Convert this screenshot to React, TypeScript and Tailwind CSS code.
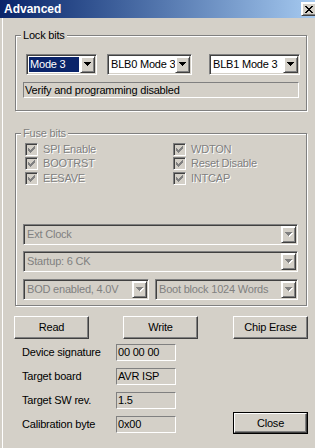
import clsx from "clsx";

const sunken =
  "border border-t-[#808080] border-l-[#808080] border-r-white border-b-white shadow-[inset_1px_1px_0_#404040,inset_-1px_-1px_0_#d4d0c8]";
const raised =
  "border border-t-white border-l-white border-r-[#404040] border-b-[#404040] shadow-[inset_-1px_-1px_0_#808080]";
const dimText = "text-[#808080] [text-shadow:1px_1px_0_#fff]";

function Arrow({ disabled }: { disabled?: boolean }) {
  return (
    <svg width="8" height="5" viewBox="0 0 8 5" className="overflow-visible" shapeRendering="crispEdges">
      {disabled && <path d="M1 1h7v1H1zM2 2h5v1H2zM3 3h3v1H3zM4 4h1v1H4z" fill="#fff" />}
      <path d="M0 0h7v1H0zM1 1h5v1H1zM2 2h3v1H2zM3 3h1v1H3z" fill={disabled ? "#808080" : "#000"} />
    </svg>
  );
}

function Combo({
  text,
  className,
  selected,
  disabled,
}: {
  text: string;
  className: string;
  selected?: boolean;
  disabled?: boolean;
}) {
  return (
    <div className={clsx("flex h-[21px] p-[1px]", sunken, disabled ? "bg-[#d4d0c8]" : "bg-white", className)}>
      <div className="flex min-w-0 flex-1 items-center overflow-hidden p-[1px]">
        <span
          className={clsx(
            "flex h-full flex-1 items-center whitespace-nowrap pl-[1px]",
            selected && "bg-[#0a246a] text-white",
            disabled && "text-[#808080]"
          )}
        >
          {text}
        </span>
      </div>
      <div className={clsx("flex w-[15px] shrink-0 items-center justify-center bg-[#d4d0c8]", raised, "border-t-[#d4d0c8] border-l-[#d4d0c8] shadow-[inset_1px_1px_0_#fff,inset_-1px_-1px_0_#808080]")}>
        <Arrow disabled={disabled} />
      </div>
    </div>
  );
}

function Check({ label }: { label: string }) {
  return (
    <div className="flex items-center">
      <div className={clsx("flex h-[13px] w-[13px] items-center justify-center bg-[#d4d0c8]", sunken)}>
        <svg width="7" height="7" viewBox="0 0 7 7" shapeRendering="crispEdges">
          <path d="M6 0h1v3H6zM5 1h1v3H5zM0 2h1v3H0zM1 3h1v3H1zM2 4h1v3H2zM3 3h1v3H3zM4 2h1v3H4z" fill="#808080" />
        </svg>
      </div>
      <span className={clsx("ml-[5px] whitespace-nowrap", dimText)}>{label}</span>
    </div>
  );
}

function Button({ label, className }: { label: string; className?: string }) {
  return (
    <div className={clsx("flex h-[23px] w-[75px] items-center justify-center bg-[#d4d0c8]", raised, className)}>
      {label}
    </div>
  );
}

function Group({ label, dim, className, children }: { label: string; dim?: boolean; className: string; children: React.ReactNode }) {
  return (
    <div
      className={clsx(
        "relative ml-[15px] w-[292px] border border-[#808080] shadow-[inset_1px_1px_0_#fff,1px_1px_0_#fff]",
        className
      )}
    >
      <span className={clsx("absolute -top-[8px] left-[5px] bg-[#d4d0c8] px-[2px] leading-[14px]", dim && dimText)}>
        {label}
      </span>
      {children}
    </div>
  );
}

const info = [
  ["Device signature", "00 00 00"],
  ["Target board", "AVR ISP"],
  ["Target SW rev.", "1.5"],
  ["Calibration byte", "0x00"],
];

export default function App() {
  return (
    <div className="flex h-[448px] w-[315px] flex-col overflow-hidden bg-[#d4d0c8] font-['Liberation_Sans',Arial,sans-serif] text-[11px] leading-[13px] tracking-[-0.2px] text-black">
      <div className="flex h-[18px] shrink-0 items-center justify-between bg-linear-to-r from-[#0a246a] to-[#a6caf0] pl-[4px]">
        <span className="text-[12px] font-bold tracking-normal text-white">Advanced</span>
        <div className={clsx("-mr-[2px] flex h-[14px] w-[16px] items-center justify-center bg-[#d4d0c8]", raised, "border-t-[#d4d0c8] border-l-[#d4d0c8] shadow-[inset_1px_1px_0_#fff,inset_-1px_-1px_0_#808080]")}>
          <svg width="8" height="7" viewBox="0 0 8 7" shapeRendering="crispEdges">
            <path d="M0 0h2v1H0zM6 0h2v1H6zM1 1h2v1H1zM5 1h2v1H5zM2 2h4v1H2zM3 3h2v1H3zM2 4h4v1H2zM1 5h2v1H1zM5 5h2v1H5zM0 6h2v1H0zM6 6h2v1H6z" fill="#000" />
          </svg>
        </div>
      </div>

      <div className="flex flex-1 flex-col shadow-[inset_2px_0_0_#d4d0c8,inset_3px_0_0_#fff]">
        <Group label="Lock bits" className="mt-[17px] h-[76px] pt-[18px]">
          <div className="flex">
            <Combo text="Mode 3" selected className="ml-[10px] w-[71px]" />
            <Combo text="BLB0 Mode 3" className="ml-[10px] w-[85px]" />
            <Combo text="BLB1 Mode 3" className="ml-[17px] w-[91px]" />
          </div>
          <div className="ml-[7px] mt-[7px] flex h-[16px] w-[276px] items-center border border-t-[#808080] border-l-[#808080] border-r-white border-b-white pl-[1px]">
            Verify and programming disabled
          </div>
        </Group>

        <Group label="Fuse bits" dim className="mt-[22px] h-[173px] pt-[8px]">
          <div className="grid grid-cols-[148px_1fr] grid-rows-[14px_15px_15px] pl-[9px]">
            <Check label="SPI Enable" />
            <Check label="WDTON" />
            <Check label="BOOTRST" />
            <Check label="Reset Disable" />
            <Check label="EESAVE" />
            <Check label="INTCAP" />
          </div>
          <Combo text="Ext Clock" disabled className="ml-[7px] mt-[38px] w-[275px]" />
          <Combo text="Startup: 6 CK" disabled className="ml-[7px] mt-[6px] w-[275px]" />
          <div className="mt-[7px] flex">
            <Combo text="BOD enabled, 4.0V" disabled className="ml-[7px] w-[126px]" />
            <Combo text="Boot block 1024 Words" disabled className="ml-[6px] w-[143px]" />
          </div>
        </Group>

        <div className="mt-[10px] flex">
          <Button label="Read" className="ml-[14px]" />
          <Button label="Write" className="ml-[34px]" />
          <Button label="Chip Erase" className="ml-[35px]" />
        </div>

        <div className="mt-[5px] flex">
          <div className="ml-[22px] flex flex-col gap-[7px]">
            {info.map(([label, value]) => (
              <div key={label} className="flex h-[17px] items-center">
                <span className="w-[94px] whitespace-nowrap">{label}</span>
                <div className="flex h-[17px] w-[60px] items-center border border-t-[#808080] border-l-[#808080] border-r-white border-b-white pl-[1px]">
                  {value}
                </div>
              </div>
            ))}
          </div>
          <div className="ml-auto mr-[7px] mt-[68px] h-[22px] w-[75px] border border-black">
            <div className={clsx("flex h-full w-full items-center justify-center bg-[#d4d0c8]", raised)}>Close</div>
          </div>
        </div>
      </div>
    </div>
  );
}
